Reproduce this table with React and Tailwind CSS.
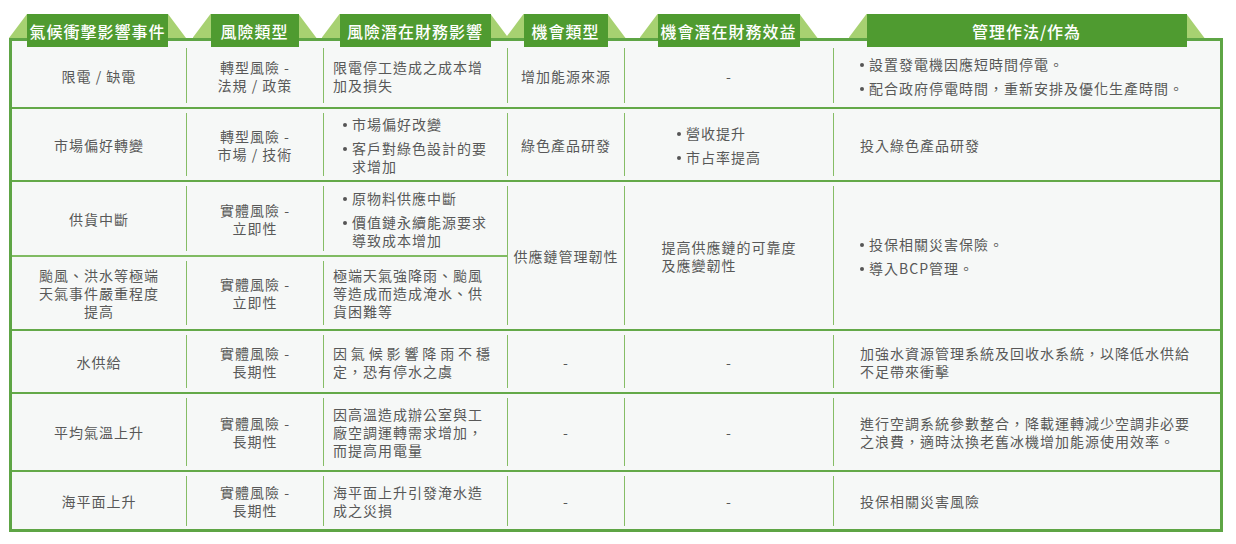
import React from "react";

const COLS = "grid-cols-[174px_137px_184px_117px_209px_387px]";

const Tab = ({ label, className = "" }) => (
  <div className="relative h-[33px] px-[18px]">
    <div className="absolute inset-x-0 top-0 h-[24px] bg-[#a7d171] [clip-path:polygon(18px_0,calc(100%_-_18px)_0,100%_100%,0_100%)]" />
    <div
      className={`relative flex h-full items-center justify-center bg-[#4f9b30] text-[16px] font-medium tracking-[1px] text-white ${className}`}
    >
      {label}
    </div>
  </div>
);

const Bullets = ({ items, className = "" }) => (
  <ul className={`flex flex-col gap-[6px] ${className}`}>
    {items.map((t) => (
      <li key={t} className="flex">
        <span className="mr-[5px] mt-[8px] h-[4px] w-[4px] shrink-0 rounded-full bg-[#555]" />
        <span>{t}</span>
      </li>
    ))}
  </ul>
);

// one table cell: outer part carries the row line, inner part the short column divider
const Cell = ({ first, line = "row", pad = "py-[4px]", className = "", inner = "", children }) => {
  const lineCls =
    line === "row"
      ? "border-b-2 border-[#64a949]"
      : line === "inner"
      ? "border-b-2 border-[#80bb62]"
      : "";
  return (
    <div className={`flex ${pad} ${lineCls} ${className}`}>
      <div className={`flex flex-1 items-center ${first ? "" : "border-l border-[#86bd66]"} ${inner}`}>
        {children}
      </div>
    </div>
  );
};

const C1 = (p) => <Cell first inner="justify-center text-center" {...p} />;
const C2 = (p) => <Cell inner="justify-center text-center" {...p} />;
const C3 = (p) => <Cell inner="pl-[9px] pr-[16px]" {...p} />;
const C4 = (p) => <Cell inner="justify-center text-center px-[4px]" {...p} />;
const C5 = (p) => <Cell inner="justify-center text-center" {...p} />;
const C6 = (p) => <Cell inner="pl-[26px] pr-[24px]" {...p} />;

export default function App() {
  return (
    <div
      lang="zh-Hant-TW"
      className="h-[544px] w-[1236px] bg-white pt-[14px] font-['Noto_Sans_CJK_TC','Noto_Sans',sans-serif]"
    >
      <div className={`relative z-10 -mb-[9px] ml-[12px] grid h-[33px] ${COLS}`}>
        <div className="-ml-[3px] flex justify-start">
          <Tab label="氣候衝擊影響事件" className="w-[141px]" />
        </div>
        <div className="flex justify-center">
          <Tab label="風險類型" className="w-[88px]" />
        </div>
        <div className="flex justify-center">
          <Tab label="風險潛在財務影響" className="w-[151px]" />
        </div>
        <div className="flex justify-center">
          <Tab label="機會類型" className="w-[84px]" />
        </div>
        <div className="flex justify-center">
          <Tab label="機會潛在財務效益" className="w-[142px]" />
        </div>
        <div className="flex justify-center">
          <Tab label="管理作法/作為" className="w-[320px]" />
        </div>
      </div>

      <div className="ml-[9px] w-[1214px] border-[3px] border-[#5ea545] bg-[#f6f8f7] text-[14px] leading-[18px] tracking-[1px] text-[#585858]">
        <div className={`grid ${COLS} grid-rows-[68px_73px_75px_74px_63px_78px_57px]`}>
          {/* row 1 */}
          <C1 pad="pt-[7px] pb-[4px]">限電 / 缺電</C1>
          <C2 pad="pt-[7px] pb-[4px]">
            轉型風險 -<br />法規 / 政策
          </C2>
          <C3 pad="pt-[7px] pb-[4px]">限電停工造成之成本增加及損失</C3>
          <C4 pad="pt-[7px] pb-[4px]">增加能源來源</C4>
          <C5 pad="pt-[7px] pb-[4px]">-</C5>
          <C6 pad="pt-[7px] pb-[4px]">
            <Bullets
              className="gap-[4px]"
              items={["設置發電機因應短時間停電。", "配合政府停電時間，重新安排及優化生產時間。"]}
            />
          </C6>

          {/* row 2 */}
          <C1>市場偏好轉變</C1>
          <C2>
            轉型風險 -<br />市場 / 技術
          </C2>
          <C3 inner="pl-[19px] pr-[16px]">
            <Bullets items={["市場偏好改變", "客戶對綠色設計的要求增加"]} />
          </C3>
          <C4>綠色產品研發</C4>
          <C5 inner="pl-[52px] text-left">
            <Bullets items={["營收提升", "市占率提高"]} />
          </C5>
          <C6>投入綠色產品研發</C6>

          {/* rows 3 + 4, right half merged */}
          <C1 line="inner">供貨中斷</C1>
          <C2 line="inner">
            實體風險 -<br />立即性
          </C2>
          <C3 line="inner" inner="pl-[19px] pr-[16px]">
            <Bullets items={["原物料供應中斷", "價值鏈永續能源要求導致成本增加"]} />
          </C3>
          <C4 className="row-span-2">供應鏈管理韌性</C4>
          <C5 className="row-span-2">
            <div className="text-left">
              提高供應鏈的可靠度
              <br />
              及應變韌性
            </div>
          </C5>
          <C6 className="row-span-2">
            <Bullets items={["投保相關災害保險。", "導入BCP管理。"]} />
          </C6>
          <C1>
            颱風、洪水等極端
            <br />
            天氣事件嚴重程度
            <br />
            提高
          </C1>
          <C2>
            實體風險 -<br />立即性
          </C2>
          <C3>極端天氣強降雨、颱風等造成而造成淹水、供貨困難等</C3>

          {/* row 5 */}
          <C1>水供給</C1>
          <C2>
            實體風險 -<br />長期性
          </C2>
          <C3>
            <p className="text-justify">因氣候影響降雨不穩定，恐有停水之虞</p>
          </C3>
          <C4>-</C4>
          <C5>-</C5>
          <C6>加強水資源管理系統及回收水系統，以降低水供給不足帶來衝擊</C6>

          {/* row 6 */}
          <C1>平均氣溫上升</C1>
          <C2>
            實體風險 -<br />長期性
          </C2>
          <C3>因高溫造成辦公室與工廠空調運轉需求增加，而提高用電量</C3>
          <C4>-</C4>
          <C5>-</C5>
          <C6>進行空調系統參數整合，降載運轉減少空調非必要之浪費，適時汰換老舊冰機增加能源使用效率。</C6>

          {/* row 7 */}
          <C1 line="none" pad="pt-[4px] pb-[3px]">海平面上升</C1>
          <C2 line="none" pad="pt-[4px] pb-[3px]">
            實體風險 -<br />長期性
          </C2>
          <C3 line="none" pad="pt-[4px] pb-[3px]">海平面上升引發淹水造成之災損</C3>
          <C4 line="none" pad="pt-[4px] pb-[3px]">-</C4>
          <C5 line="none" pad="pt-[4px] pb-[3px]">-</C5>
          <C6 line="none" pad="pt-[4px] pb-[3px]">投保相關災害風險</C6>
        </div>
      </div>
    </div>
  );
}
